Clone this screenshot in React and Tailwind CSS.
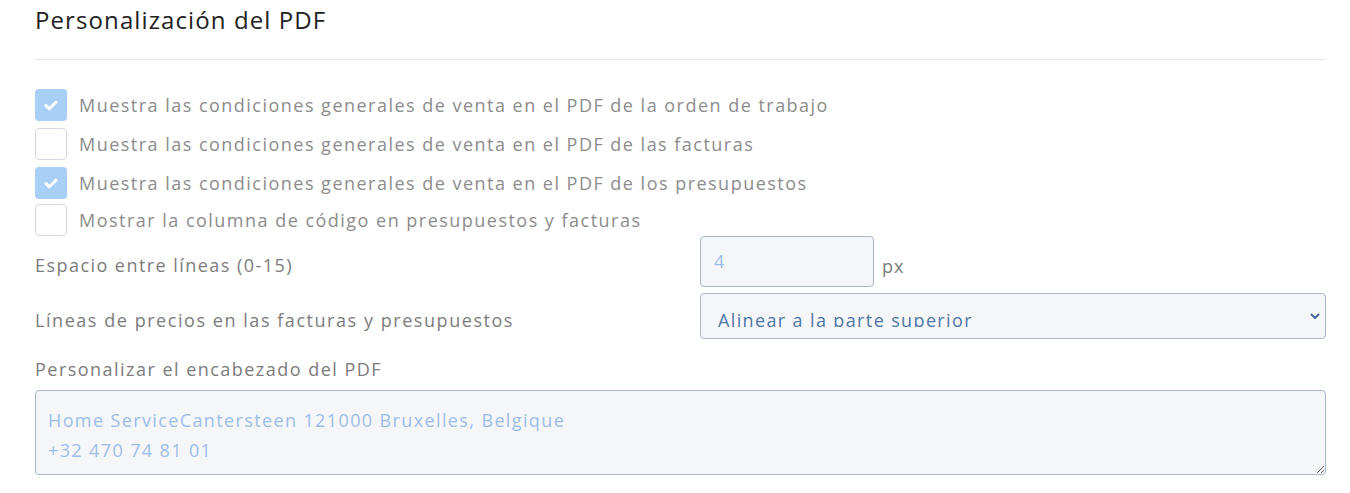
import React from "react";

function Check({ checked }) {
  return checked ? (
    <div className="w-[32px] h-[32px] rounded-[4px] bg-[#a8cff5] flex items-center justify-center shrink-0">
      <svg width="14" height="11" viewBox="0 0 14 11" fill="none">
        <path d="M2 5.6 L5.4 8.8 L12 2.2" stroke="white" strokeWidth="3" strokeLinecap="round" strokeLinejoin="round" />
      </svg>
    </div>
  ) : (
    <div className="w-[32px] h-[32px] rounded-[4px] border border-[#d3d9e3] bg-white shrink-0" />
  );
}

function Row({ checked, label, mb }) {
  return (
    <div className={`flex items-center h-[32px] ${mb}`}>
      <Check checked={checked} />
      <span className="ml-[12px] text-[18px] text-[#8c8c8c] tracking-[1.48px] leading-none whitespace-nowrap">{label}</span>
    </div>
  );
}

export default function App() {
  return (
    <div className="w-[1350px] h-[493px] bg-white pl-[35px] pr-[24px] overflow-hidden" style={{ fontFamily: '"Open Sans", "Noto Sans", sans-serif' }}>
      <div className="h-[40px] flex items-center text-[24px] text-[#222] tracking-[1.1px]">Personalización del PDF</div>
      <div className="mt-[19px] h-px w-[1291px] bg-[#e3e8ef]" />
      <div className="mt-[29px]">
        <Row checked label="Muestra las condiciones generales de venta en el PDF de la orden de trabajo" mb="mb-[7px]" />
        <Row label="Muestra las condiciones generales de venta en el PDF de las facturas" mb="mb-[7px]" />
        <Row checked label="Muestra las condiciones generales de venta en el PDF de los presupuestos" mb="mb-[5px]" />
        <Row label="Mostrar la columna de código en presupuestos y facturas" mb="" />
      </div>
      <div className="flex">
        <div className="w-[665px] shrink-0 pt-[18px] text-[18px] text-[#7c7c7c] leading-[22px] tracking-[1.45px] whitespace-nowrap">Espacio entre líneas (0-15)</div>
        <div className="w-[174px] h-[51px] shrink-0 rounded-[4px] border border-[#a9b7cd] bg-[#f5f6f8] px-[13px] flex items-center text-[18px] text-[#9dbde9]">4</div>
        <div className="ml-[8px] pt-[19px] text-[18px] text-[#7c7c7c] leading-[22px] tracking-[1px]">px</div>
      </div>
      <div className="flex mt-[6px]">
        <div className="w-[665px] shrink-0 pt-[16px] text-[18px] text-[#7c7c7c] leading-[22px] tracking-[1.55px] whitespace-nowrap">Líneas de precios en las facturas y presupuestos</div>
        <div className="w-[626px] shrink-0 h-[46px] rounded-[4px] border border-[#a9b7cd] bg-[#f5f6f8] flex items-start justify-between">
          <div className="h-[33px] overflow-hidden pl-[17px] pt-[15px] text-[18px] text-[#4f77a8] leading-[22px] tracking-[1.37px] whitespace-nowrap">Alinear a la parte superior</div>
          <div className="h-full flex items-center pr-[5px]">
            <svg width="10" height="7" viewBox="0 0 10 7" fill="none">
              <path d="M1.5 1.5 L5 5 L8.5 1.5" stroke="#4a6b9a" strokeWidth="2" strokeLinecap="round" strokeLinejoin="round" />
            </svg>
          </div>
        </div>
      </div>
      <div className="mt-[19px] text-[18px] text-[#7c7c7c] leading-[22px] tracking-[1.47px] whitespace-nowrap">Personalizar el encabezado del PDF</div>
      <textarea
        readOnly
        value={"Home ServiceCantersteen 121000 Bruxelles, Belgique\n+32 470 74 81 01"}
        className="mt-[10px] block w-[1291px] h-[85px] rounded-[4px] border border-[#a9b7cd] bg-[#f5f6f8] px-[12px] pt-[14px] text-[18px] leading-[30px] tracking-[1.38px] text-[#9dbde9] outline-none"
        style={{ fontFamily: '"Open Sans", "Noto Sans", sans-serif' }}
      />
    </div>
  );
}
